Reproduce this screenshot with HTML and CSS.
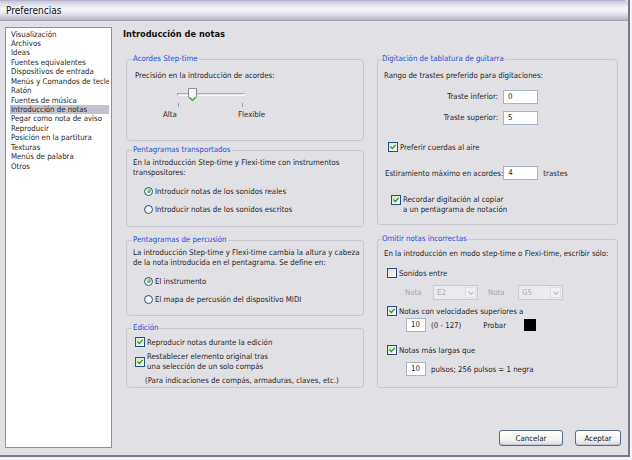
FILE: index.html
```html
<!DOCTYPE html>
<html lang="es">
<head>
<meta charset="utf-8">
<title>Preferencias</title>
<link rel="stylesheet" href="styles.css">
</head>
<body>
<div class="window">
  <div class="titlebar"><span class="title">Preferencias</span></div>
  <div class="client">
    <ul class="list">
      <li>Visualización</li>
      <li>Archivos</li>
      <li>Ideas</li>
      <li>Fuentes equivalentes</li>
      <li>Dispositivos de entrada</li>
      <li>Menús y Comandos de teclec</li>
      <li>Ratón</li>
      <li>Fuentes de música</li>
      <li class="sel">Introducción de notas</li>
      <li>Pegar como nota de aviso</li>
      <li>Reproducir</li>
      <li>Posición en la partitura</li>
      <li>Texturas</li>
      <li>Menús de palabra</li>
      <li>Otros</li>
    </ul>
    <div class="page">
      <div class="page-title">Introducción de notas</div>
      <div class="columns">
        <div class="col col-left">
          <fieldset class="box box-acordes">
            <legend>Acordes Step-time</legend>
            <div class="line indent2">Precisión en la introducción de acordes:</div>
            <div class="slider">
              <span class="track"></span>
              <span class="tick tick-a"></span>
              <span class="tick tick-b"></span>
              <svg class="thumb" viewBox="0 0 9 14" width="9" height="14">
                <path d="M0.5 0.5 H8.5 V9 L4.5 13 L0.5 9 Z" fill="#f5f5f2" stroke="#8a8a96"/>
                <path d="M1.5 9.3 L4.5 12.2 L7.5 9.3" fill="none" stroke="#3fb53f" stroke-width="1.4"/>
              </svg>
            </div>
            <div class="slider-labels"><span class="lab-alta">Alta</span><span class="lab-flex">Flexible</span></div>
          </fieldset>

          <fieldset class="box box-transp">
            <legend>Pentagramas transportados</legend>
            <div class="para">En la introducción Step-time y Flexi-time con instrumentos<br>transpositores:</div>
            <div class="opt opt-radio first"><span class="rb on"></span><span>Introducir notas de los sonidos reales</span></div>
            <div class="opt opt-radio second"><span class="rb"></span><span>Introducir notas de los sonidos escritos</span></div>
          </fieldset>

          <fieldset class="box box-perc">
            <legend>Pentagramas de percusión</legend>
            <div class="para">La introducción Step-time y Flexi-time cambia la altura y cabeza<br>de la nota introducida en el pentagrama. Se define en:</div>
            <div class="opt opt-radio first"><span class="rb on"></span><span>El instrumento</span></div>
            <div class="opt opt-radio second"><span class="rb"></span><span>El mapa de percusión del dispositivo MIDI</span></div>
          </fieldset>

          <fieldset class="box box-edit">
            <legend>Edición</legend>
            <div class="opt opt-cb"><span class="cb"><svg viewBox="0 0 10 10"><path d="M2.3 4.9 L4.2 6.9 L7.8 3"/></svg></span><span>Reproducir notas durante la edición</span></div>
            <div class="opt opt-cb two"><span class="cb"><svg viewBox="0 0 10 10"><path d="M2.3 4.9 L4.2 6.9 L7.8 3"/></svg></span><span class="para">Restablecer elemento original tras<br>una selección de un solo compás</span></div>
            <div class="line note">(Para indicaciones de compás, armaduras, claves, etc.)</div>
          </fieldset>
        </div>

        <div class="col col-right">
          <fieldset class="box box-tab">
            <legend>Digitación de tablatura de guitarra</legend>
            <div class="line">Rango de trastes preferido para digitaciones:</div>
            <div class="fret-grid">
              <span class="fl">Traste inferior:</span><span class="input">0</span>
              <span class="fl">Traste superior:</span><span class="input">5</span>
            </div>
            <div class="opt opt-cb pref"><span class="cb"><svg viewBox="0 0 10 10"><path d="M2.3 4.9 L4.2 6.9 L7.8 3"/></svg></span><span>Preferir cuerdas al aire</span></div>
            <div class="stretch"><span class="sl">Estiramiento máximo en acordes:</span><span class="input">4</span><span class="after">trastes</span></div>
            <div class="opt opt-cb top rec"><span class="cb"><svg viewBox="0 0 10 10"><path d="M2.3 4.9 L4.2 6.9 L7.8 3"/></svg></span><span class="para">Recordar digitación al copiar<br>a un pentagrama de notación</span></div>
          </fieldset>

          <fieldset class="box box-omit">
            <legend>Omitir notas incorrectas</legend>
            <div class="line">En la introducción en modo step-time o Flexi-time, escribir sólo:</div>
            <div class="opt opt-cb r-son"><span class="cb off"></span><span>Sonidos entre</span></div>
            <div class="nota-row">
              <span class="dis nl1">Nota</span>
              <span class="combo"><span class="cv">E2</span><span class="cbtn"><svg viewBox="0 0 8 8" width="8" height="8"><path d="M1.5 2.8 L4 5.3 L6.5 2.8" fill="none" stroke="#c4c3cc" stroke-width="1.3"/></svg></span></span>
              <span class="dis nl2">Nota</span>
              <span class="combo"><span class="cv">G5</span><span class="cbtn"><svg viewBox="0 0 8 8" width="8" height="8"><path d="M1.5 2.8 L4 5.3 L6.5 2.8" fill="none" stroke="#c4c3cc" stroke-width="1.3"/></svg></span></span>
            </div>
            <div class="opt opt-cb r-vel"><span class="cb"><svg viewBox="0 0 10 10"><path d="M2.3 4.9 L4.2 6.9 L7.8 3"/></svg></span><span>Notas con velocidades superiores a</span></div>
            <div class="in-row r-vel-in"><span class="input small">10</span><span class="rng">(0 - 127)</span><span class="probar">Probar</span><span class="swatch"></span></div>
            <div class="opt opt-cb r-long"><span class="cb"><svg viewBox="0 0 10 10"><path d="M2.3 4.9 L4.2 6.9 L7.8 3"/></svg></span><span>Notas más largas que</span></div>
            <div class="in-row r-long-in"><span class="input small">10</span><span class="rng">pulsos; 256 pulsos = 1 negra</span></div>
          </fieldset>
        </div>
      </div>
      <div class="buttons">
        <button class="btn btn-cancel">Cancelar</button>
        <button class="btn btn-ok">Aceptar</button>
      </div>
    </div>
  </div>
</div>
</body>
</html>
```

FILE: styles.css
```css
* { box-sizing: border-box; }
html, body { margin: 0; padding: 0; }
body {
  width: 632px;
  height: 460px;
  overflow: hidden;
  background: #f4f4f6;
  font-family: "DejaVu Sans Condensed", "Liberation Sans", sans-serif;
  font-size: 7.8px;
  color: #262626;
}
.window {
  width: 630px;
  height: 457px;
  display: flex;
  flex-direction: column;
  background: #e1e0e5;
  border-right: 2px solid #77768a;
  border-bottom: 2px solid #77768a;
}
.titlebar {
  height: 21px;
  flex: none;
  display: flex;
  align-items: center;
  padding-left: 6px;
  border-top-right-radius: 5px;
  border-bottom: 1px solid #a4a3b6;
  background: linear-gradient(to bottom, #a5a3bd 0px, #c6c5d9 1px, #dddce9 4px, #f7f7fb 9px, #eeeef4 12px, #d6d5e2 16px, #bdbccd 19px, #b4b3c6 20px);
}
.title {
  font-size: 10px;
  color: #111;
  padding-top: 1px;
}
.client {
  flex: 1;
  display: flex;
  padding: 6px 0 7px 5px;
  min-height: 0;
}
.list {
  list-style: none;
  margin: 0;
  width: 107px;
  flex: none;
  padding: 1.6px 2px 0 4px;
  background: #fff;
  border: 1px solid #8f8ea2;
  overflow: hidden;
}
.list li {
  height: 9.43px;
  line-height: 9.43px;
  padding-left: 1px;
  white-space: nowrap;
  overflow: hidden;
}
.list li.sel { background: #c3c2cc; }
.page {
  flex: 1;
  margin-left: 11px;
  display: flex;
  flex-direction: column;
  min-width: 0;
}
.page-title {
  height: 14px;
  line-height: 14px;
  font-size: 9.2px;
  font-weight: bold;
  color: #111;
}
.columns {
  display: flex;
  gap: 13px;
  margin-top: 13px;
  padding-left: 3px;
}
.col { display: flex; flex-direction: column; }
.col-left { width: 238px; }
.col-right { width: 241px; }

.box {
  margin: 0;
  min-width: 0;
  border: 1px solid #c8c7d0;
  border-radius: 3px;
  padding: 0 6px;
}
.box legend {
  padding: 0 1px;
  margin-left: -1px;
  line-height: 10px;
  height: 10px;
  color: #1f4fd6;
}
.col-right .box legend { margin-left: -3px; }

.line { height: 10px; line-height: 10px; white-space: nowrap; }
.para { line-height: 9.5px; white-space: nowrap; }
.indent2 { padding-left: 2px; }

/* Acordes */
.box-acordes { padding-top: 7px; padding-bottom: 20px; }
.slider { position: relative; height: 27px; }
.track {
  position: absolute;
  left: 44px; top: 12px;
  width: 68px; height: 3px;
  border: 1px solid #a9a8b5;
  border-bottom-color: #f6f6f8;
  border-right-color: #f6f6f8;
  background: #e7e6ea;
}
.tick {
  position: absolute;
  top: 22px;
  width: 1px; height: 4px;
  background: #9d9caa;
}
.tick-a { left: 45px; }
.tick-b { left: 109px; }
.thumb { position: absolute; left: 55px; top: 7px; }
.slider-labels { position: relative; height: 10px; line-height: 10px; margin-top: 2px; }
.lab-alta { position: absolute; left: 30px; }
.lab-flex { position: absolute; left: 105px; }

/* radios / checkboxes */
.opt { display: flex; align-items: center; height: 12px; }
.opt.two { height: 19px; }
.opt.top { align-items: flex-start; height: 19px; }
.rb {
  width: 9px; height: 9px;
  border-radius: 50%;
  border: 1px solid #33507e;
  background: radial-gradient(circle at 65% 70%, #fff 30%, #dcdcd8 100%);
  display: inline-flex; align-items: center; justify-content: center;
  margin-right: 2px;
  flex: none;
}
.rb.on::after {
  content: "";
  width: 4px; height: 4px; border-radius: 50%;
  background: radial-gradient(circle at 35% 35%, #8be38b, #21a121);
}
.cb {
  width: 10px; height: 10px;
  border: 1px solid #2a4e80;
  background: linear-gradient(135deg, #dddcd6, #fbfbfa);
  margin-right: 2px;
  flex: none;
  display: inline-flex;
}
.cb svg { width: 8px; height: 8px; }
.cb path { fill: none; stroke: #21a121; stroke-width: 1.7; stroke-linecap: square; }

.box-transp, .box-perc { padding-top: 3px; }
.box-transp { margin-top: 4px; padding-bottom: 11px; }
.box-perc { margin-top: 8px; padding-bottom: 10px; }
.opt-radio { padding-left: 11px; }
.opt-radio.first { margin-top: 8px; }
.opt-radio.second { margin-top: 6px; }

.box-edit { margin-top: 7px; padding-top: 3px; padding-bottom: 1px; }
.box-edit .opt-cb { padding-left: 2px; }
.box-edit .opt-cb.two { margin-top: 4px; }
.note { margin-top: 5px; padding-left: 12px; }

/* right column */
.box-tab { padding-top: 7px; padding-bottom: 10px; }
.fret-grid {
  display: grid;
  grid-template-columns: 114px 35px;
  column-gap: 5px;
  row-gap: 7px;
  margin-top: 9px;
}
.fl { text-align: right; height: 14px; line-height: 14px; white-space: nowrap; }
.input {
  display: inline-block;
  flex: none;
  height: 14px;
  line-height: 12px;
  width: 35px;
  padding-left: 4px;
  background: #fff;
  border: 1px solid #a5b4c8;
}
.input.small { width: 20px; padding-left: 4px; }
.pref { margin-top: 16px; padding-left: 4px; }
.stretch { display: flex; align-items: center; height: 14px; margin-top: 13px; padding-left: 1px; }
.sl { flex: 0 0 118px; white-space: nowrap; }
.after { margin-left: 5px; flex: none; }
.rec { margin-top: 15px; padding-left: 7px; }

.box-omit { margin-top: 9px; padding-top: 5px; padding-bottom: 11px; }
.r-son { margin-top: 8px; padding-left: 3px; }
.nota-row { display: flex; align-items: center; height: 15px; margin-top: 6px; }
.dis { color: #a9a8b2; flex: none; }
.nl1 { margin-left: 21px; width: 28px; }
.nl2 { margin-left: 10px; width: 30px; }
.combo {
  display: flex;
  flex: none;
  width: 45px; height: 15px;
  border: 1px solid #c9c8d0;
  background: #ebebef;
  padding: 1px;
}
.cv { flex: 1; color: #a9a8b2; line-height: 11px; padding-left: 2px; }
.cbtn {
  width: 11px; height: 11px;
  display: flex; align-items: center; justify-content: center;
  border: 1px solid #dedde3;
  background: #f0f0f3;
}
.r-vel { margin-top: 5px; padding-left: 3px; }
.in-row { display: flex; align-items: center; height: 14px; padding-left: 22px; }
.r-vel-in { margin-top: 1px; }
.rng { margin-left: 5px; flex: none; }
.probar { margin-left: 22px; flex: none; }
.swatch { width: 12px; height: 12px; background: #000; margin-left: 18px; flex: none; }
.r-long { margin-top: 12px; padding-left: 3px; }
.r-long-in { margin-top: 6px; }

/* dialog buttons */
.buttons {
  margin-top: auto;
  margin-bottom: 2px;
  display: flex;
  justify-content: flex-end;
  gap: 12px;
  padding-right: 7px;
}
.btn {
  font: inherit;
  color: #111;
  height: 16px;
  padding: 0;
  border: 1px solid #5a6a86;
  border-radius: 3px;
  background: linear-gradient(to bottom, #ffffff 0%, #f4f4f2 60%, #dcdbe0 100%);
  box-shadow: inset 0 -1px 0 #c6c5d0;
}
.btn-cancel { width: 64px; }
.btn-ok { width: 46px; }
```
